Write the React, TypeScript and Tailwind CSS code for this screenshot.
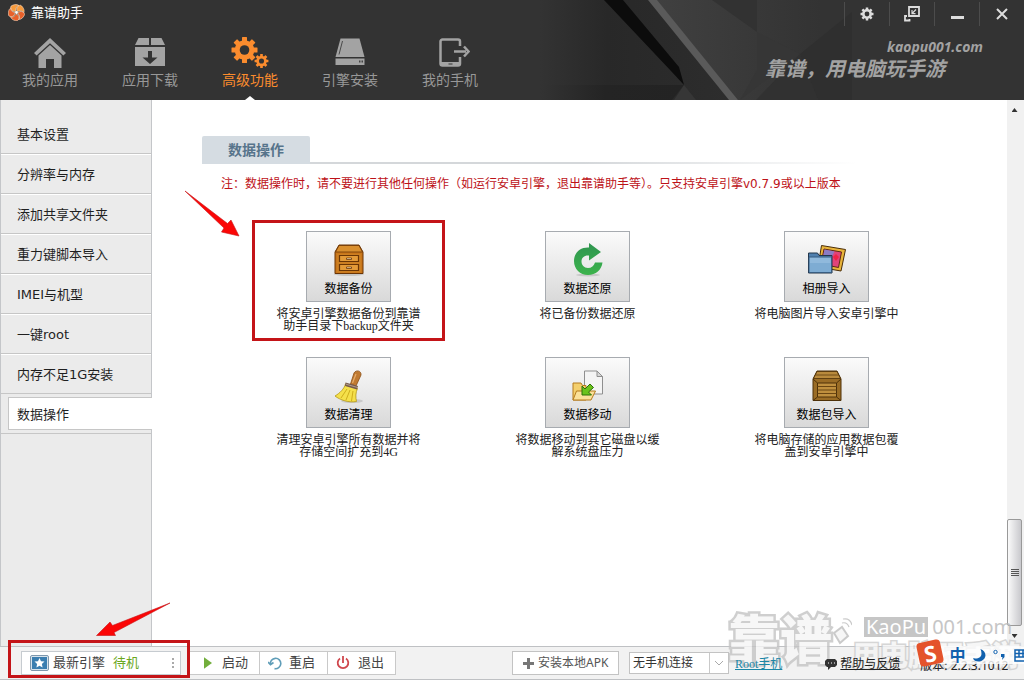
import type { ReactNode } from 'react';

const HomeIcon = () => (
  <svg width="32" height="32" viewBox="0 0 32 32" fill="#a3a3a3" aria-hidden="true">
    <path d="M16 1 0 16l2.6 2.6L16 6.2l13.4 12.4L32 16z" />
    <path d="M16 8 4.5 18.5V31H12v-9h8v9h7.500V18.500z" />
  </svg>
);

const BoxIcon = () => (
  <svg width="32" height="32" viewBox="0 0 32 32" fill="#a3a3a3" aria-hidden="true">
    <path d="M4.500 1H15v7H1zM17 1h10.500L31 8H17z" />
    <path fillRule="evenodd" d="M1 10h30v19H1zM14 14v6.500H8.500L16 27l7.500-6.500H18V14z" />
  </svg>
);

const Gear = ({ cx, cy, r, fill }: { cx: number; cy: number; r: number; fill: string }) => (
  <g transform={`translate(${cx} ${cy}) scale(${r / 12})`}>
    {[0, 45, 90, 135].map((a) => (
      <rect key={a} x="-2.500" y="-13" width="5" height="26" rx="0.500" fill={fill} transform={`rotate(${a})`} />
    ))}
    <circle r="9.800" fill={fill} />
    <circle r="4.800" fill="#333" />
  </g>
);

const GearsIcon = () => (
  <svg width="38" height="32" viewBox="0 0 38 32" aria-hidden="true">
    <Gear cx={13.5} cy={13} r={12} fill="#fb8c2e" />
    <Gear cx={30.5} cy={24} r={6.4} fill="#fb8c2e" />
  </svg>
);

const DiskIcon = () => (
  <svg width="30" height="32" viewBox="0 0 30 32" aria-hidden="true">
    <path d="M5.500 1.500h19L29.500 20h-29z" fill="#a3a3a3" />
    <path d="M7.500 4 4 17.500" stroke="#4a4a4a" strokeWidth="1" />
    <path d="M.5 21.500h29V28h-29z" fill="#a3a3a3" />
    <path d="M24 23.500h1.500v2H24zM26.500 23.500H28v2h-1.500z" fill="#444" />
  </svg>
);

const PhoneIcon = () => (
  <svg className="ml-2" width="32" height="32" viewBox="0 0 32 32" fill="none" aria-hidden="true">
    <path d="M22 9V4.500a2 2 0 0 0-2-2H4.500a2 2 0 0 0-2 2v22a2 2 0 0 0 2 2H20a2 2 0 0 0 2-2V20" stroke="#a3a3a3" strokeWidth="2.500" />
    <path d="M3 25h19v3H3z" fill="#a3a3a3" />
    <path d="M10.500 27h4" stroke="#333" />
    <path d="M16 14.500h12M26 9.500l4.500 5L26 19.500" stroke="#a3a3a3" strokeWidth="2.500" />
  </svg>
);

const LogoIcon = () => (
  <svg width="17" height="17" viewBox="0 0 18 18" aria-hidden="true">
    {[0, 72, 144, 216, 288].map((a, i) => (
      <path
        key={a}
        d="M9 7.500C5.500 7 4 3 6.500.5 9 0 13 .5 14.500 3.500 12 3 10.500 4 9 7.500z"
        fill={i < 2 ? '#f79a3c' : '#e8602a'}
        stroke="#fde0c4"
        strokeWidth="0.600"
        transform={`rotate(${a - 25} 9 9)`}
      />
    ))}
    <circle cx="9" cy="9" r="1.500" fill="#fff" />
  </svg>
);

const HeaderBackdrop = () => (
  <svg className="absolute inset-y-0 right-0" width="484" height="100" viewBox="540 0 484 100" aria-hidden="true">
    <defs>
      <linearGradient id="fade" x1="0" x2="1">
        <stop offset="0" stopColor="#333" />
        <stop offset="0.350" stopColor="#282828" />
        <stop offset="1" stopColor="#2d2d2d" />
      </linearGradient>
      <linearGradient id="floor" x1="0" x2="1">
        <stop offset="0" stopColor="#333" />
        <stop offset="0.450" stopColor="#242424" />
        <stop offset="1" stopColor="#232323" />
      </linearGradient>
      <linearGradient id="glow" x1="0" x2="1">
        <stop offset="0" stopColor="#404040" />
        <stop offset="1" stopColor="#333" />
      </linearGradient>
    </defs>
    <path d="M540 0h110l82 100H540z" fill="url(#fade)" />
    <path d="M540 85 684 85 672 100H540z" fill="url(#floor)" />
    <path d="M604 0h19l56 67 5 18-13-14z" fill="#0c0c0c" />
    <path d="m684 85 12 15h-22z" fill="#363636" />
    <path d="M656 0h165v100h-83z" fill="url(#glow)" />
    <path d="M648 0h9l81 100h-9z" fill="#5a5a5a" />
    <path d="M712 0h45v32z" fill="#323232" />
    <path d="m757 32 43 22-60 46 17-30z" fill="#363636" />
    <path d="m800 54 52-42v88h-34z" fill="#2f2f2f" />
    <path d="m800 54 18 46h-62z" fill="#313131" />
  </svg>
);

const CabinetIcon = () => (
  <svg width="34" height="34" viewBox="0 0 34 34" aria-hidden="true">
    <ellipse cx="17" cy="31" rx="15" ry="2" fill="#c6c6c6" />
    <path d="M7 2h20l4 7v21.500H3V9z" fill="#c9761a" stroke="#6b3505" />
    <path d="M7 2.500h20l3.500 6.500h-27z" fill="#d98f2e" stroke="#6b3505" strokeWidth="0.800" />
    <path d="M5 11h24v18.500H5z" fill="#cc7f22" />
    <path d="M7.500 12.500h19v6h-19zM7.500 21.500h19v6h-19z" fill="#e39a38" stroke="#6b3505" strokeWidth="1.200" />
    <path d="M14.500 15h5v1.500h-5zM14.500 24h5v1.500h-5z" fill="#fff1cf" stroke="#6b3505" strokeWidth="0.800" />
  </svg>
);

const RestoreIcon = () => (
  <svg width="34" height="34" viewBox="0 0 34 34" aria-hidden="true">
    <defs>
      <linearGradient id="green" x1="0" y1="0" x2="0" y2="1">
        <stop offset="0" stopColor="#2f9550" />
        <stop offset="1" stopColor="#3cb34c" />
      </linearGradient>
    </defs>
    <ellipse cx="17" cy="32" rx="12" ry="1.500" fill="#c8c8c8" />
    <path d="M18 0v4.500C9 4 3 10 3 18 3 26 9 32 17 32c8 0 13.500-5 14.500-12.500H24c-1 3.500-3.500 5.500-7 5.500-4 0-6.500-3-6.500-6.500 0-4 3-6.500 7.500-6v5L30 9z" fill="url(#green)" />
  </svg>
);

const AlbumIcon = () => (
  <svg width="40" height="34" viewBox="0 0 40 34" aria-hidden="true">
    <path d="m14.500 2.500 24 4L34 28l-23-4z" fill="#e8b43a" stroke="#4b2d08" />
    <path d="m17 6 17.500 3-3 15.500L14 21z" fill="#e0447a" stroke="#5d2a14" />
    <path d="m17.500 6.500 10 2-4 8-8 1z" fill="#8b7cc4" />
    <path d="m26 14 3-3 3 3-3 4z" fill="#f02346" />
    <path d="M1.500 10h9l1.500 2.500h13V30h-23.500z" fill="#4f7fae" stroke="#23364b" />
    <path d="M2 14h22.500v15.500H2z" fill="#7eacd3" stroke="#315377" strokeWidth="0.800" />
    <path d="M3 15h20.500v5H3z" fill="#9cc2e2" opacity="0.600" />
  </svg>
);

const BroomIcon = () => (
  <svg width="34" height="36" viewBox="0 0 34 36" aria-hidden="true">
    <ellipse cx="20" cy="32" rx="11" ry="2" fill="#cacaca" />
    <path d="M22 4c2-3.500 7.500-2.500 7 2l-5 11-5.500-2z" fill="#c07a32" stroke="#8a4f17" strokeWidth="0.800" />
    <path d="M24 5 20.500 14" stroke="#e5ad6c" strokeWidth="1.200" />
    <path d="m13.500 15 12 4.500c-2 4-2 9-1 13C17 34 8 31 3 27c5-3 9-7 10.500-12z" fill="#f5e04a" stroke="#b39716" strokeWidth="0.800" />
    <path d="m15 20-6 9M18 21l-4 10M21 22l-1.500 10" stroke="#cfae1d" fill="none" />
    <path d="m13.500 13.500 12.500 3.500-1 3.500L13 17z" fill="#765a4c" />
    <path d="m14 15.200 11.500 3.300" stroke="#d9c9b8" strokeWidth="0.600" />
  </svg>
);

const MoveIcon = () => (
  <svg width="34" height="34" viewBox="0 0 34 34" aria-hidden="true">
    <path d="M13.500 2H26l5.500 5.500V25h-18z" fill="#f4f4f4" stroke="#8f8f8f" />
    <path d="M26 2v5.500h5.500z" fill="#d8d8d8" stroke="#8f8f8f" />
    <path d="M2 14h8l1.500 2.500H15V31H2z" fill="#f4cf6c" stroke="#b47b1d" />
    <path d="M5.500 22h19L20 31H2z" fill="#fbe19a" stroke="#b47b1d" />
    <path d="m19 15 3.500 3.500-5 4.500 3 3H11v-9l3 3z" fill="#6bc31c" stroke="#2d7108" />
  </svg>
);

const CrateIcon = () => (
  <svg width="32" height="34" viewBox="0 0 32 34" aria-hidden="true">
    <path d="M6 2h20l4 8v21.500H2V10z" fill="#9a6c25" stroke="#4e3108" />
    <path d="M6 2.500h20l3.500 7h-27z" fill="#b98a3c" stroke="#4e3108" strokeWidth="0.800" />
    <path d="M4.500 6h23" stroke="#5d3c0e" strokeWidth="0.800" />
    <path d="M6.500 14h19v14h-19z" fill="#bf8f3e" stroke="#4e3108" />
    <path d="M6.500 17.500h19M6.500 21h19M6.500 24.500h19" stroke="#6b4612" />
    <path d="m2 10 4.500 4M30 10l-4.500 4M2 31.500 6.500 28M30 31.500 25.500 28" stroke="#4e3108" />
  </svg>
);

const tabs: { label: string; icon: ReactNode; active?: boolean }[] = [
  { label: '我的应用', icon: <HomeIcon /> },
  { label: '应用下载', icon: <BoxIcon /> },
  { label: '高级功能', icon: <GearsIcon />, active: true },
  { label: '引擎安装', icon: <DiskIcon /> },
  { label: '我的手机', icon: <PhoneIcon /> },
];

const menu = ['基本设置', '分辨率与内存', '添加共享文件夹', '重力键脚本导入', 'IMEI与机型', '一键root', '内存不足1G安装', '数据操作'];

const cards: { label: string; icon: ReactNode; lines: string[]; marked?: boolean }[] = [
  { label: '数据备份', icon: <CabinetIcon />, lines: ['将安卓引擎数据备份到靠谱', '助手目录下backup文件夹'], marked: true },
  { label: '数据还原', icon: <RestoreIcon />, lines: ['将已备份数据还原'] },
  { label: '相册导入', icon: <AlbumIcon />, lines: ['将电脑图片导入安卓引擎中'] },
  { label: '数据清理', icon: <BroomIcon />, lines: ['清理安卓引擎所有数据并将', '存储空间扩充到4G'] },
  { label: '数据移动', icon: <MoveIcon />, lines: ['将数据移动到其它磁盘以缓', '解系统盘压力'] },
  { label: '数据包导入', icon: <CrateIcon />, lines: ['将电脑存储的应用数据包覆', '盖到安卓引擎中'] },
];

function Header() {
  return (
    <header className="relative h-[100px] shrink-0 bg-[#333]">
      <HeaderBackdrop />
      <div className="relative flex h-full justify-between">
        <div className="flex flex-col">
          <div className="flex h-[25px] items-center gap-1.5 pl-2 text-[13px] leading-none text-white">
            <LogoIcon />
            <h1>靠谱助手</h1>
          </div>
          <nav className="flex flex-1">
            {tabs.map((t) => (
              <button
                key={t.label}
                type="button"
                className={`relative flex w-[100px] flex-col items-center pt-3 text-sm leading-5 ${t.active ? 'text-[#fb8c2e]' : 'text-[#989898]'}`}
              >
                <span className="flex h-[33px] items-start">{t.icon}</span>
                <span>{t.label}</span>
                {t.active && (
                  <span className="absolute bottom-0 h-1 w-2.5 bg-white [clip-path:polygon(50%_0,100%_100%,0_100%)]" />
                )}
              </button>
            ))}
          </nav>
        </div>
        <div className="flex flex-col items-end">
          <div className="mt-0.5 flex h-6 text-[#ddd]">
            <button type="button" aria-label="设置" className="flex w-[45px] items-center justify-center border-l border-[#4c4c4c]">
              <svg width="14" height="14" viewBox="-14 -14 28 28">
                <Gear cx={0} cy={0} r={12} fill="#ddd" />
              </svg>
            </button>
            <button type="button" aria-label="精简模式" className="flex w-[45px] items-center justify-center border-l border-[#4c4c4c]">
              <svg width="16" height="16" viewBox="0 0 16 16" fill="none" stroke="currentColor">
                <path d="M5 1h10v9H5z" strokeWidth="1.800" />
                <path d="m12 3.500-4 4M8 4v3.700h3.500" strokeWidth="1.200" />
                <path d="M3 10H1v4.500h4.500V13" strokeWidth="1.800" />
              </svg>
            </button>
            <button type="button" aria-label="最小化" className="flex w-[45px] items-center justify-center border-l border-[#4c4c4c] pt-1.5">
              <span className="h-[3px] w-[13px] bg-[#ddd]" />
            </button>
            <button type="button" aria-label="关闭" className="flex w-[45px] items-center justify-center border-l border-[#4c4c4c]">
              <svg width="12" height="12" viewBox="0 0 12 12" stroke="currentColor" strokeWidth="2">
                <path d="m1 1 10 10M11 1 1 11" />
              </svg>
            </button>
          </div>
          <p className="mt-[13px] pr-[41px] font-['Noto_Sans'] text-[14px] leading-4 font-bold text-[#a2a2a2] italic">kaopu001.com</p>
          <p className="mt-0.5 pr-[79px] text-[20px] leading-6 font-bold text-[#a2a2a2] italic">靠谱，用电脑玩手游</p>
        </div>
      </div>
    </header>
  );
}

function Sidebar() {
  return (
    <aside className="w-[152px] shrink-0 border-x border-[#c4c6c9] bg-[#ebebeb] pt-3.5 font-['DejaVu_Sans','Noto_Sans_CJK_SC',sans-serif]">
      <ul>
        {menu.map((m, i) => {
          const active = i === menu.length - 1;
          const line = i === 0 ? '' : 'border-t border-white';
          return (
            <li key={m} className="flex h-10 items-center border-b border-[#c6c6c6]">
              <a
                href="#"
                className={
                  active
                    ? '-mr-px ml-[7px] flex h-[33px] flex-1 items-center border border-r-0 border-[#c6c6c6] bg-white pt-0.5 pl-2'
                    : `flex h-full flex-1 items-center pt-0.5 pl-4 ${line}`
                }
              >
                {m}
              </a>
            </li>
          );
        })}
      </ul>
    </aside>
  );
}

function Content() {
  return (
    <main className="relative min-w-0 flex-1 bg-white pt-9">
      <div className="flex items-end pr-[150px] pl-[50px]">
        <h2 className="rounded-t-xs bg-[#d5dce2] px-[26px] text-[14px] leading-7 font-bold text-[#57748b]">数据操作</h2>
        <span className="h-0.5 flex-1 bg-linear-to-r from-[#d4d7da] from-50% to-white" />
      </div>
      <p className="mt-2.5 pl-[69px] font-['DejaVu_Sans','Noto_Sans_CJK_SC',sans-serif] text-xs leading-5 whitespace-nowrap text-[#bd1218]">
        注：数据操作时，请不要进行其他任何操作（如运行安卓引擎，退出靠谱助手等）。只支持安卓引擎v0.7.9或以上版本
      </p>
      <div className="mt-[37px] grid grid-cols-3 pr-[61px] pl-[77px]">
        {cards.map((c) => (
          <section key={c.label} className="relative flex h-[126px] flex-col items-center">
            <button
              type="button"
              className="flex h-[71px] w-[85px] flex-col items-center justify-end border border-[#a7abb0] bg-linear-to-b from-[#fbfbfb] to-[#d9d9d9] pb-[3px] text-xs leading-[18px] text-black"
            >
              <span className="flex h-[37px] items-start">{c.icon}</span>
              {c.label}
            </button>
            <p className="pt-1.5 text-center font-['Liberation_Serif','Noto_Sans_CJK_SC',serif] text-xs leading-3 text-[#222]">
              {c.lines.map((l) => (
                <span key={l} className="block whitespace-nowrap">{l}</span>
              ))}
            </p>
            {c.marked && (
              <span className="pointer-events-none absolute -top-[11px] h-[121px] w-[193px] border-3 border-[#c41418]" />
            )}
          </section>
        ))}
      </div>
      <svg className="pointer-events-none absolute top-[90px] left-8" width="56" height="48" viewBox="184 190 56 48" aria-hidden="true">
        <path d="m185 191 42.500 32.500L231 220l8 16-17.500-4 2.500-4z" fill="#fb0606" stroke="#c41418" strokeWidth="0.600" />
      </svg>
    </main>
  );
}

function Scrollbar() {
  return (
    <div className="flex w-[17px] shrink-0 flex-col items-center bg-[#f1f1f1] pr-0.5" aria-hidden="true">
      <span className="mt-2 h-1 w-1.5 bg-[#333] [clip-path:polygon(50%_0,100%_100%,0_100%)]" />
      <span className="flex-1" />
      <span className="flex h-[107px] w-full flex-col items-center justify-center gap-px rounded-xs border border-[#999] bg-linear-to-r from-[#fafafa] to-[#c9c9cd]">
        <span className="h-px w-2 bg-[#555]" />
        <span className="h-px w-2 bg-[#555]" />
        <span className="h-px w-2 bg-[#555]" />
        <span className="h-px w-2 bg-[#555]" />
      </span>
      <span className="mt-2 mb-2 h-1 w-1.5 bg-[#333] [clip-path:polygon(0_0,100%_0,50%_100%)]" />
    </div>
  );
}

function Watermark() {
  return (
    <div className="pointer-events-none absolute right-1 bottom-0 flex h-[70px] items-start opacity-80" aria-hidden="true">
      <div className="flex text-[52px] leading-[60px] font-black text-[#f6f6f6] [-webkit-text-stroke:5px_#c4c4c4] [paint-order:stroke_fill]">
        <span>靠</span>
        <span>谱</span>
      </div>
      <svg className="mt-2" width="20" height="30" viewBox="0 0 20 30" fill="none" stroke="#bebebe" strokeWidth="2">
        <path d="m2 16 8-6 6 9-8 7z" fill="#f4f4f4" />
        <path d="M10 6c4-1 6 1 7 4M11 2c5-1 8 2 9 6" strokeWidth="1.200" />
      </svg>
      <div className="flex flex-col">
        <p className="flex items-center gap-1 pt-2 pl-3 font-['Noto_Sans'] text-[20px] leading-[20px]">
          <span className="bg-[#b8b8b8] px-0.5 text-white">KaoPu</span>
          <span className="text-[#b8b8b8]">001.com</span>
        </p>
        <p className="pt-0.5 text-[28px] leading-[32px] font-black text-[#f4f4f4] [-webkit-text-stroke:3px_#cccccc] [paint-order:stroke_fill]">用电脑玩手游</p>
      </div>
    </div>
  );
}

function InputMethodBar() {
  return (
    <div className="absolute right-0 bottom-[15px] flex h-[18px] w-[106px] items-center justify-between bg-white/80 text-[#1161ae]">
      <span className="-mt-1 flex size-[24px] shrink-0 -rotate-12 items-center justify-center rounded-sm bg-[#e4532b] text-[22px] leading-none font-bold text-white">S</span>
      <span className="text-[16px] leading-none font-bold">中</span>
      <svg className="shrink-0" width="13" height="13" viewBox="0 0 14 14" fill="currentColor" aria-hidden="true">
        <path d="M8 0c6 2 8 9 1 13-4 1.500-8 0-9-3 8 1 11-3 8-10z" />
      </svg>
      <svg className="shrink-0" width="13" height="12" viewBox="0 0 13 12" aria-hidden="true">
        <circle cx="2.500" cy="3" r="1.700" fill="none" stroke="currentColor" />
        <path d="M8 5h3.500v3L9 11l.500-3H8z" fill="currentColor" />
      </svg>
      <svg className="shrink-0" width="10" height="13" viewBox="0 0 10 13" fill="none" stroke="currentColor" strokeWidth="1.500" aria-hidden="true">
        <path d="M10 1H1v11h9M1 4.500h9M1 8h9M5 1v7M9 1v7" />
      </svg>
    </div>
  );
}

function Footer() {
  return (
    <footer className="relative flex h-[34px] shrink-0 items-center border-t border-b border-[#bfc1c4] bg-[#f2f2f2] pl-[21px] text-[13px] text-[#444]">
      <Watermark />
      <div className="relative">
        <button type="button" className="flex h-6 w-40 items-center border border-[#c6cbd0] bg-white pl-2">
          <svg width="19" height="16" viewBox="0 0 19 16" aria-hidden="true">
            <rect x="0.500" y="0.500" width="18" height="15" rx="1.500" fill="#d8e3ec" stroke="#7e98ad" />
            <rect x="2" y="2" width="15" height="12" fill="#3b7eb0" />
            <path d="m9.500 3 1.500 3.200 3.500.4-2.600 2.300.7 3.500-3.100-1.700-3.100 1.700.7-3.500L4.500 6.600l3.500-.4z" fill="#fff" />
          </svg>
          <span className="ml-1">最新引擎</span>
          <span className="ml-2 text-[#6ba81e]">待机</span>
          <span className="mr-1.5 ml-auto flex flex-col gap-0.5" aria-hidden="true">
            <span className="size-0.5 bg-[#aaa]" />
            <span className="size-0.5 bg-[#aaa]" />
            <span className="size-0.5 bg-[#aaa]" />
          </span>
        </button>
        <span className="pointer-events-none absolute -top-[11px] -left-[13px] h-[38px] w-[182px] border-3 border-[#c41418]" />
        <svg className="pointer-events-none absolute -top-[49px] left-[75px]" width="76" height="36" viewBox="96 602 76 36" aria-hidden="true">
          <path d="m170 603-57.500 22.500L110 622l-13.500 13.500h19l-1.500-3z" fill="#fb0606" stroke="#c41418" strokeWidth="0.600" />
        </svg>
      </div>
      <div className="ml-[9px] flex h-6 border border-l-0 border-[#c9c9c9] bg-white">
        <button type="button" className="flex w-[69px] items-center gap-2.5 pl-3.5">
          <svg width="8" height="12" viewBox="0 0 9 13" fill="#72ae3c" aria-hidden="true"><path d="M0 0v13l9-6.500z" /></svg>
          启动
        </button>
        <button type="button" className="flex w-[68px] items-center gap-[7px] border-l border-[#c9c9c9] pl-2">
          <svg width="14" height="14" viewBox="0 0 14 14" fill="none" stroke="#5f9db8" strokeWidth="1.600" aria-hidden="true">
            <path d="M2.500 8.500A5.200 5.200 0 1 1 6.500 12.600M0 6 2.500 8.700 5.500 6.500" />
          </svg>
          重启
        </button>
        <button type="button" className="flex w-[68px] items-center gap-2 border-l border-[#c9c9c9] pl-2">
          <svg width="14" height="14" viewBox="0 0 14 14" fill="none" stroke="#d0474d" strokeWidth="1.800" aria-hidden="true">
            <path d="M4 2.500a5.300 5.300 0 1 0 6 0M7 0v7" />
          </svg>
          退出
        </button>
      </div>
      <button type="button" className="ml-[116px] flex h-6 w-[107px] items-center gap-1 border border-[#c3c3c3] bg-white pl-2.5 text-xs text-[#555]">
        <svg width="11" height="11" viewBox="0 0 11 11" fill="#777" aria-hidden="true"><path d="M4 0h3v4h4v3H7v4H4V7H0V4h4z" /></svg>
        安装本地APK
      </button>
      <div className="relative ml-2.5">
        <select aria-label="手机连接" className="block h-[22px] w-[100px] appearance-none border border-[#c3c3c3] bg-white pl-[3px] text-xs text-[#333]">
          <option>无手机连接</option>
        </select>
        <span className="pointer-events-none absolute inset-y-px right-px flex w-[19px] items-center justify-center border-l border-[#c9c9c9]">
          <svg width="8" height="5" viewBox="0 0 8 5" fill="none" stroke="#aaa" aria-hidden="true"><path d="m0 0 4 4 4-4" /></svg>
        </span>
      </div>
      <a href="#" className="relative ml-1.5 pt-0.5 font-['Liberation_Serif','Noto_Sans_CJK_SC',serif] text-xs text-[#1b86a6] underline">Root手机</a>
      <a href="#" className="relative ml-[43px] flex items-center gap-[3px] pt-0.5 text-xs text-[#222]">
        <svg width="12" height="11" viewBox="0 0 12 11" aria-hidden="true">
          <path d="M2 0h8l2 2v4L10 8H6l-3 3V8H2L0 6V2z" fill="#333" />
          <path d="M3 4h1M6 4h1M9 4h1" stroke="#fff" />
        </svg>
        <span className="underline">帮助与反馈</span>
      </a>
      <span className="relative ml-5 pt-1.5 text-xs whitespace-nowrap text-[#222]">版本: 2.2.3.1012</span>
      <InputMethodBar />
    </footer>
  );
}

export default function App() {
  return (
    <div className="flex min-h-screen flex-col overflow-hidden bg-white font-['Noto_Sans','Noto_Sans_CJK_SC',sans-serif] text-[13px] text-[#1f1f1f]" lang="zh-CN">
      <Header />
      <div className="flex flex-1">
        <Sidebar />
        <Content />
        <Scrollbar />
      </div>
      <Footer />
    </div>
  );
}
